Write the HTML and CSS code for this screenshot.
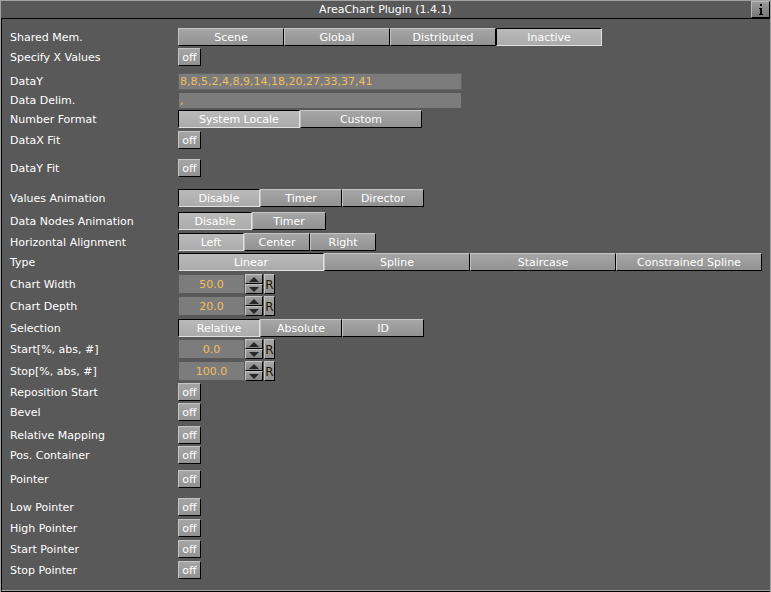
FILE: index.html
```html
<!DOCTYPE html>
<html lang="en">
<head>
<meta charset="utf-8">
<title>AreaChart Plugin</title>
<link rel="stylesheet" href="styles.css">
</head>
<body>
<main class="panel">
<header class="titlebar">
<h1 class="title">AreaChart Plugin (1.4.1)</h1>
<button class="info" type="button" aria-label="Info"><svg viewBox="0 0 6 12" width="6" height="12" shape-rendering="crispEdges"><path d="M2 0h2v2H2zM1 4h3v6h1v1H1v-1h1V5H1z"/></svg></button>
</header>
<form class="rows" id="rows"></form>
</main>
<script src="script.js"></script>
</body>
</html>
```
FILE: styles.css
```css
* {
  box-sizing: border-box;
}

body {
  margin: 0;
  background: #595959;
  color: #fff;
  font: 11px/16px "DejaVu Sans", Verdana, sans-serif;
}

button,
input {
  margin: 0;
  border-radius: 0;
  font: inherit;
}

.panel {
  display: flex;
  flex-direction: column;
  min-height: 100vh;
  border: 1px solid #a2a2a2;
  border-bottom: 0;
}

.titlebar {
  display: grid;
  grid-template-columns: 19px 1fr 19px;
  height: 18px;
  border-bottom: 1px solid #000;
}

.title {
  grid-column: 2;
  margin: 0;
  padding-top: 1px;
  font-size: 11px;
  font-weight: normal;
  line-height: 16px;
  text-align: center;
}

.info {
  display: grid;
  place-items: center;
  padding: 0;
  border: 1px solid;
  border-color: #b8b8b8 #000 #000 #b8b8b8;
  background: linear-gradient(#999, #777);
}

.rows {
  flex: 1;
  padding: 9px 8px 6px;
  border-left: 1px solid #000;
  border-bottom: 1px solid #a2a2a2;
  box-shadow: 0 1px #000;
  margin-bottom: 1px;
}

.row {
  display: grid;
  grid-template-columns: 168px 1fr;
  align-items: center;
  min-height: 18px;
  margin-bottom: 2px;
}

.tight { margin-bottom: 1px; }
.loose { margin-bottom: 3px; }
.pair { margin-bottom: 5px; }
.group { margin-bottom: 6px; }
.section { margin-bottom: 10px; }
.block { margin-bottom: 12px; }

.label {
  padding-top: 1px;
  line-height: 17px;
  white-space: nowrap;
}

.segments {
  display: flex;
}

.button {
  display: block;
  height: 18px;
  padding: 2px 0 0;
  border: 1px solid;
  border-color: #c4c4c4 #000 #000 #c4c4c4;
  background: linear-gradient(#a6a6a6, #929292);
  color: #fff;
  line-height: 14px;
  white-space: nowrap;
}

.button[aria-pressed="true"] {
  border-color: #000 #e0e0e0 #e0e0e0 #000;
  background: linear-gradient(#bababa, #ababab);
}

.toggle[aria-pressed] {
  width: 23px;
}

.w66 { width: 66px; }
.w74 { width: 74px; }
.w82 { width: 82px; }
.w106 { width: 106px; }
.w122 { width: 122px; }
.w146 { width: 146px; }

.field {
  width: 284px;
  height: 17px;
  padding: 0 1px;
  border: 1px solid #636363;
  background: #7c7c7c;
  color: #f3bc5e;
  outline: 0;
}

.plain {
  border-color: #595959;
}

.stepper {
  display: flex;
  height: 20px;
}

.number {
  width: 67px;
  height: 20px;
  border-color: #595959;
  text-align: center;
}

.spin {
  display: grid;
  grid-template-rows: 10px 10px;
  width: 18px;
  margin-right: 1px;
}

.arrow {
  display: grid;
  place-items: center;
  padding: 0;
  border: 1px solid;
  border-color: #c4c4c4 #000 #000 #c4c4c4;
  background: linear-gradient(#a0a0a0, #858585);
  fill: #24282c;
}

.reset {
  width: 11px;
  height: 20px;
  color: #181800;
  font-size: 12px;
}
```
FILE: script.js
```js
const toggle = (label, gap) => ({ kind: "toggle", label, gap });
const text = (label, value, style, gap) => ({ kind: "text", label, value, style, gap });
const number = (label, value, gap) => ({ kind: "number", label, value, gap });
const choice = (label, width, options, active, gap) =>
  ({ kind: "choice", label, width, options, active, gap });

const settings = [
  choice("Shared Mem.", "w106", ["Scene", "Global", "Distributed", "Inactive"], 3),
  toggle("Specify X Values", "group"),
  text("DataY", "8,8,5,2,4,8,9,14,18,20,27,33,37,41", "", "tight"),
  text("Data Delim.", ",", "plain", "tight"),
  choice("Number Format", "w122", ["System Locale", "Custom"], 0, "loose"),
  toggle("DataX Fit", "section"),
  toggle("DataY Fit", "block"),
  choice("Values Animation", "w82", ["Disable", "Timer", "Director"], 0, "pair"),
  choice("Data Nodes Animation", "w74", ["Disable", "Timer"], 0, "loose"),
  choice("Horizontal Alignment", "w66", ["Left", "Center", "Right"], 0),
  choice("Type", "w146", ["Linear", "Spline", "Staircase", "Constrained Spline"], 0, "loose"),
  number("Chart Width", "50.0"),
  number("Chart Depth", "20.0", "loose"),
  choice("Selection", "w82", ["Relative", "Absolute", "ID"], 0),
  number("Start[%, abs, #]", "0.0"),
  number("Stop[%, abs, #]", "100.0"),
  toggle("Reposition Start"),
  toggle("Bevel", "pair"),
  toggle("Relative Mapping"),
  toggle("Pos. Container", "group"),
  toggle("Pointer", "section"),
  toggle("Low Pointer", "loose"),
  toggle("High Pointer", "loose"),
  toggle("Start Pointer", "loose"),
  toggle("Stop Pointer")
];

const arrow = (name, path) =>
  `<button class="arrow" type="button" aria-label="${name}"><svg width="10" height="5" viewBox="0 0 10 5"><path d="${path}"/></svg></button>`;

const controls = {
  toggle: (s, id) =>
    `<div><button class="button toggle" id="${id}" type="button" aria-pressed="false">off</button></div>`,
  text: (s, id) =>
    `<div class="segments"><input class="field ${s.style}" id="${id}" type="text" value="${s.value}"></div>`,
  number: (s, id) =>
    `<div class="stepper"><input class="field number" id="${id}" type="text" inputmode="decimal" value="${s.value}">` +
    `<span class="spin">${arrow("Increase", "M0 5L5 0L10 5z")}${arrow("Decrease", "M0 0H10L5 5z")}</span>` +
    `<button class="button reset" type="button">R</button></div>`,
  choice: (s, id) =>
    `<div class="segments" role="group" aria-labelledby="${id}">` +
    s.options.map((option, i) =>
      `<button class="button ${s.width}" type="button" aria-pressed="${i === s.active}">${option}</button>`).join("") +
    `</div>`
};

document.getElementById("rows").innerHTML = settings.map((s, i) => {
  const id = "setting-" + i;
  const label = s.kind === "choice"
    ? `<span class="label" id="${id}">${s.label}</span>`
    : `<label class="label" for="${id}">${s.label}</label>`;
  return `<div class="row ${s.gap || ""}">${label}${controls[s.kind](s, id)}</div>`;
}).join("");

document.querySelectorAll(".segments .button").forEach(button => {
  button.addEventListener("click", () => {
    for (const sibling of button.parentElement.children) {
      sibling.setAttribute("aria-pressed", sibling === button);
    }
  });
});
document.querySelectorAll(".toggle").forEach(button => {
  button.addEventListener("click", () => {
    const on = button.getAttribute("aria-pressed") !== "true";
    button.setAttribute("aria-pressed", on);
    button.textContent = on ? "on" : "off";
  });
});
```
